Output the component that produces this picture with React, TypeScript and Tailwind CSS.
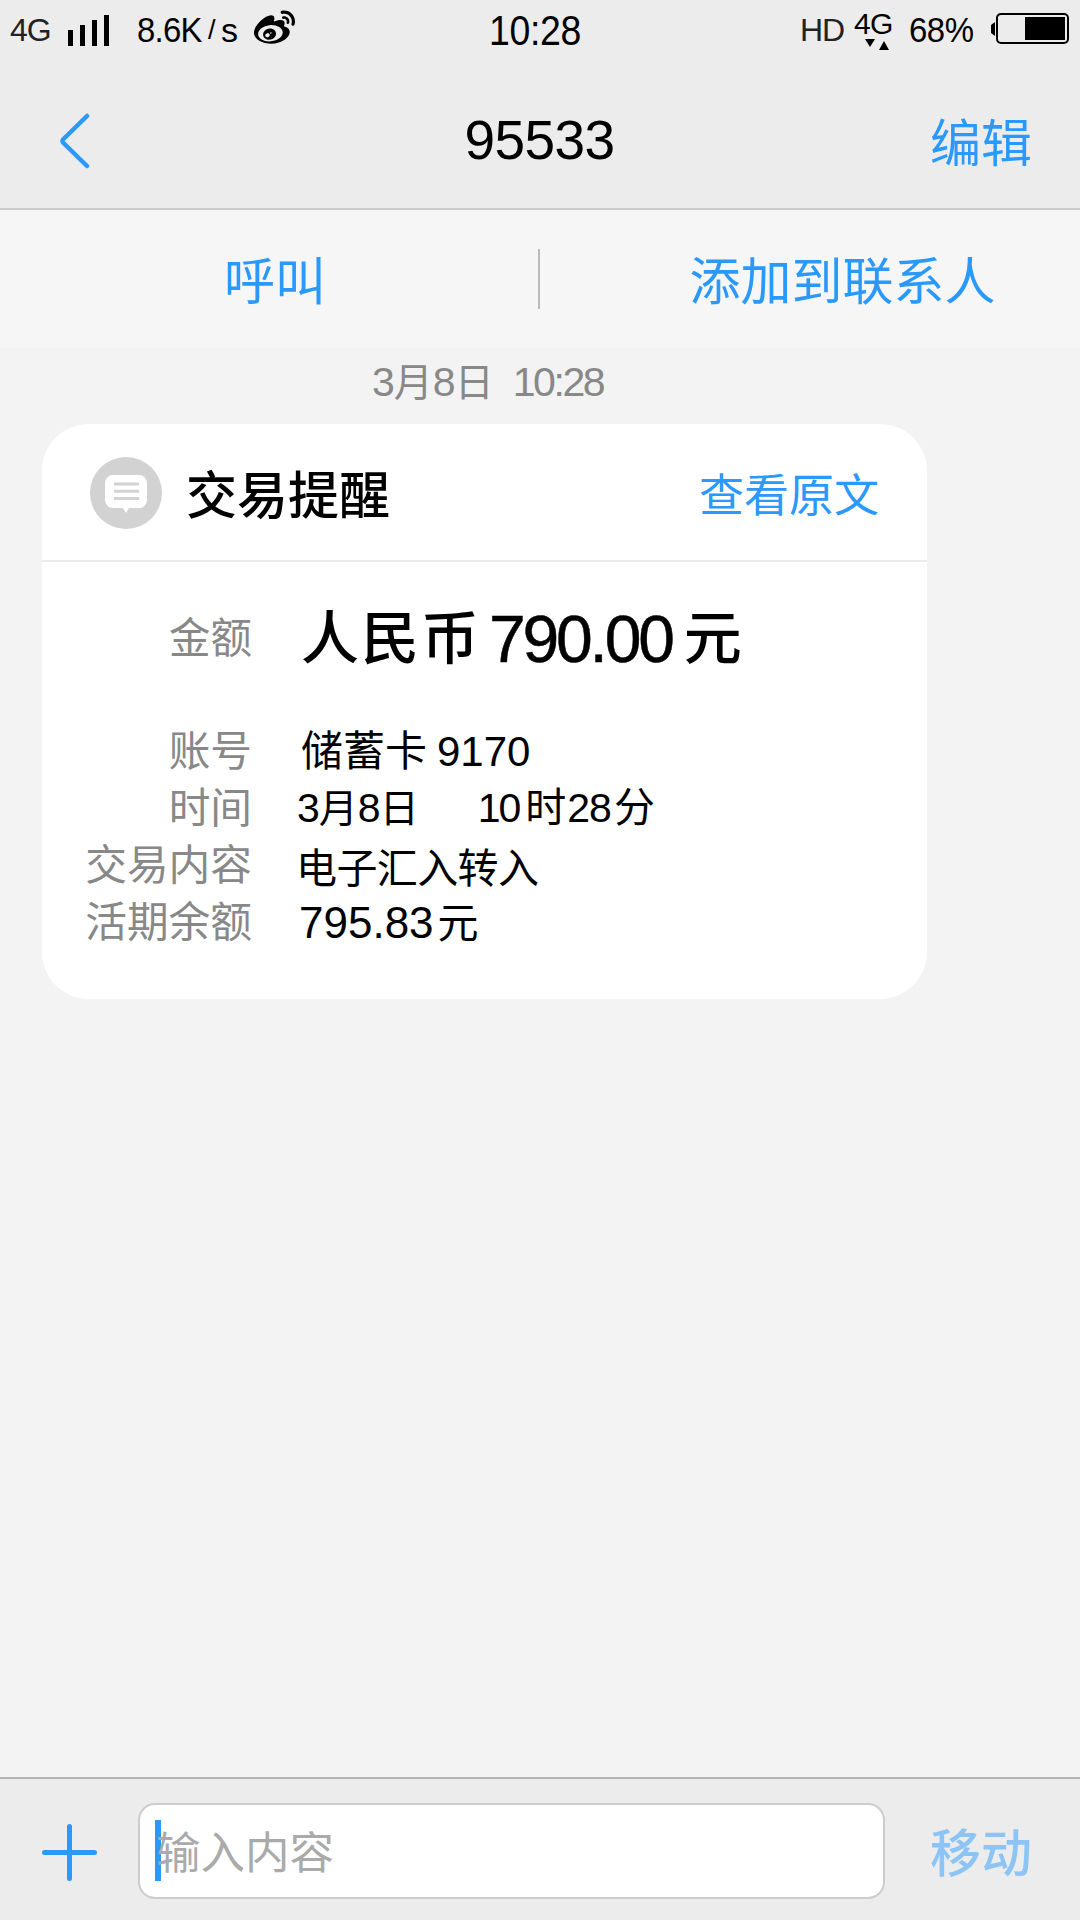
import React from 'react';
import { FaWeibo } from 'react-icons/fa';

const details = [
  { label: '账号', value: <><span className="ml-[1px] text-[42px]">储蓄卡</span><span className="ml-[10px] text-[42px]">9170</span></> },
  {
    label: '时间',
    value: (
      <>
        <span className="-ml-[3px] tracking-[-1px] text-[41px]">3</span>
        <span className="text-[39px]">月</span>
        <span className="tracking-[-1px] text-[41px]">8</span>
        <span className="text-[39px]">日</span>
        <span className="ml-[59px] tracking-[-2px] text-[41px]">10</span>
        <span className="ml-[6px] text-[41px]">时</span>
        <span className="ml-[1px] tracking-[-1px] text-[41px]">28</span>
        <span className="ml-[3px] text-[41px]">分</span>
      </>
    ),
  },
  { label: '交易内容', value: <span className="-ml-[4px] mt-[4px] tracking-[-0.6px] text-[41px]">电子汇入转入</span> },
  { label: '活期余额', value: <><span className="-ml-[1px] text-[44px]">795.83</span><span className="ml-[4px] text-[41px]">元</span></> },
];

function StatusBar() {
  return (
    <div className="flex h-[60px] shrink-0 whitespace-nowrap leading-[60px]">
      <div className="flex w-[489px]">
        <span className="ml-[10px] w-[58px] tracking-[-1px] text-[32px] text-[#222]">4G</span>
        <svg className="mt-[15px] h-[31px] w-[41px]" viewBox="0 0 41 31">
          <path d="M0 15h5v16H0zM12 10h5v21h-5zM24 5h5v26h-5zM36 0h5v31h-5z" />
        </svg>
        <span className="ml-[28px] w-[71px] origin-left scale-x-[0.94] tracking-[-0.8px] text-[35px]">8.6K</span>
        <span className="w-[13px] text-[27px]">/</span>
        <span className="text-[34px]">s</span>
        <FaWeibo className="ml-[16px] mt-[8px]" size={41} />
      </div>
      <span className="w-[311px] origin-left scale-x-[0.87] tracking-[-0.4px] text-[43px]">10:28</span>
      <span className="w-[54px] tracking-[-1px] text-[32px] text-[#222]">HD</span>
      <div className="flex w-[55px] flex-col">
        <span className="h-[38px] leading-[48px] tracking-[-0.6px] text-[30px]">4G</span>
        <svg className="ml-[11px] h-[12px] w-[24px]" viewBox="0 0 24 12">
          <path d="M0 1h10L5 9zM14 12h10L19 3z" />
        </svg>
      </div>
      <span className="w-[82px] origin-left scale-x-[0.94] tracking-[-0.5px] text-[35px]">68%</span>
      <svg className="mt-[13px] h-[31px] w-[78px]" viewBox="0 0 78 31">
        <path d="M4 9v14L0 20v-8z" />
        <rect x="6" y="1" width="71" height="29" rx="4" fill="none" stroke="black" strokeWidth="2" />
        <rect x="34" y="4" width="40" height="23" />
      </svg>
    </div>
  );
}

export default function App() {
  return (
    <div className="flex h-[1920px] w-[1080px] flex-col overflow-hidden bg-[#f3f3f3] font-['Liberation_Sans','Noto_Sans_CJK_SC',sans-serif] text-black">
      <header className="flex h-[210px] flex-col border-b-2 border-[#ccc] bg-[#ececec]">
        <StatusBar />
        <div className="flex h-[148px] items-start justify-between pl-[59px] pr-[48px]">
          <svg className="mt-[53px] h-[56px] w-[100px]" viewBox="0 0 100 56" fill="none" stroke="#2a99fb" strokeWidth="4.5" strokeLinecap="round" strokeLinejoin="round">
            <path d="M28 3L4 26.500Q3 28 4 29.500L28 53" />
          </svg>
          <h1 className="mr-[10px] mt-[40px] leading-[80px] tracking-[-0.6px] text-[55px]">95533</h1>
          <button className="mt-[45px] leading-[80px] text-[51px] text-[#2a99fb]">编辑</button>
        </div>
      </header>

      <div className="flex h-[138px] shrink-0 items-center bg-[#f6f6f6] leading-[80px] text-[51px] text-[#2a99fb]">
        <button className="w-[538px] pl-[12px] pt-[8px]">呼叫</button>
        <div className="h-[60px] w-[2px] bg-[#bbb]" />
        <button className="flex-1 pl-[65px] pt-[8px]">添加到联系人</button>
      </div>

      <main className="flex-1">
        <div className="flex h-[76px] items-baseline pl-[372px] leading-[68px] text-[#888]">
          <span className="tracking-[-1px] text-[41px]">3</span>
          <span className="text-[39px]">月</span>
          <span className="tracking-[-1px] text-[41px]">8</span>
          <span className="text-[39px]">日</span>
          <span className="ml-[19px] tracking-[-2.4px] text-[41px]">10:28</span>
        </div>

        <section className="ml-[42px] h-[575px] w-[885px] rounded-[47px] bg-white">
          <div className="flex h-[138px] items-center border-b-2 border-[#ebebeb] pl-[48px] pr-[48px]">
            <svg className="mt-[2px] h-[72px] w-[72px]" viewBox="0 0 72 72">
              <circle cx="36" cy="36" r="36" fill="#d2d2d2" />
              <path d="M23 18h26a8 8 0 0 1 8 8v17a8 8 0 0 1-8 8h-10L36 56l-3-5h-10a8 8 0 0 1-8-8V26a8 8 0 0 1 8-8z" fill="white" />
              <path d="M24 27h25M24 34.200h25M24 41.500h25" stroke="#d2d2d2" strokeWidth="3" />
            </svg>
            <h2 className="ml-[24px] mt-[10px] flex-1 font-medium text-[51px]">交易提醒</h2>
            <button className="mt-[9px] text-[45px] text-[#2a99fb]">查看原文</button>
          </div>

          <div className="flex h-[161px] items-start whitespace-nowrap">
            <span className="mt-[37px] w-[210px] text-right leading-[80px] text-[41.500px] text-[#888]">金额</span>
            <div className="ml-[49px] mt-[37px] flex leading-[80px]">
              <span className="font-medium tracking-[2px] text-[58px]">人民币</span>
              <span className="ml-[8px] tracking-[-3.2px] text-[66px] [-webkit-text-stroke:0.5px_black]">790.00</span>
              <span className="ml-[12px] font-medium text-[58px]">元</span>
            </div>
          </div>

          {details.map(row => (
            <div key={row.label} className="flex h-[57px] whitespace-nowrap leading-[57px]">
              <span className="w-[210px] text-right text-[41.700px] text-[#888]">{row.label}</span>
              <div className="ml-[48px] flex items-baseline">{row.value}</div>
            </div>
          ))}
        </section>
      </main>

      <footer className="flex h-[143px] shrink-0 border-t-2 border-[#b3b3b3] bg-[#ececec]">
        <svg className="ml-[42px] mt-[45px] h-[57px] w-[55px]" viewBox="0 0 55 57" stroke="#2a99fb" strokeWidth="5" strokeLinecap="round">
          <path d="M2.500 28.500h50M27.500 2.500v52" />
        </svg>
        <div className="relative ml-[41px] mt-[24px] h-[96px] w-[747px] rounded-[17px] border-2 border-[#ccc] bg-white">
          <div className="absolute left-[15px] top-[15px] h-[61px] w-[6px] bg-[#2a99fb]" />
          <span className="relative ml-[16px] block leading-[98px] text-[44.500px] text-[#aaa]">输入内容</span>
        </div>
        <button className="ml-[45px] mt-[36px] h-[80px] font-medium leading-[80px] text-[51px] text-[#8cc5f5]">移动</button>
      </footer>
    </div>
  );
}
